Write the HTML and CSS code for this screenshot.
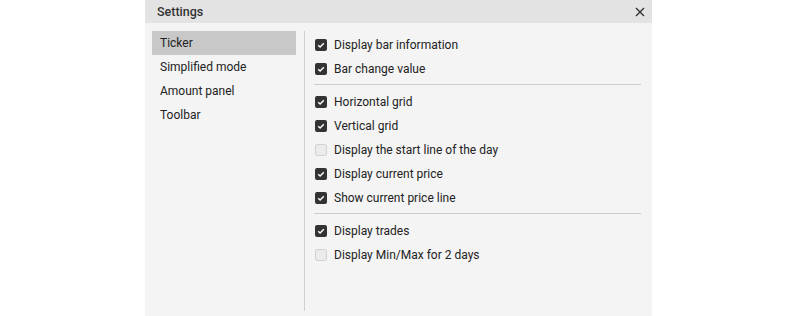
FILE: index.html
```html
<!DOCTYPE html>
<html>
<head>
    <meta charset="UTF-8">
    <title>Settings</title>
    <link rel="stylesheet" href="styles.css">
</head>
<body>
    <div class="dialog">
        <div class="header">
            <span class="title">Settings</span>
            <svg class="close" width="10" height="10" viewBox="0 0 10 10"><path d="M1 1L9 9M9 1L1 9" stroke="#333" stroke-width="1.4" fill="none"/></svg>
        </div>
        <div class="body">
            <div class="sidebar">
                <div class="navItem active">Ticker</div>
                <div class="navItem">Simplified mode</div>
                <div class="navItem">Amount panel</div>
                <div class="navItem">Toolbar</div>
            </div>
            <div class="content">
                <div class="row"><span class="box on"><svg width="12" height="12" viewBox="0 0 12 12"><path d="M3.2 6.2L5.1 8L8.8 4.2" stroke="#fff" stroke-width="1.4" fill="none"/></svg></span>Display bar information</div>
                <div class="row"><span class="box on"><svg width="12" height="12" viewBox="0 0 12 12"><path d="M3.2 6.2L5.1 8L8.8 4.2" stroke="#fff" stroke-width="1.4" fill="none"/></svg></span>Bar change value</div>
                <div class="sep"></div>
                <div class="row"><span class="box on"><svg width="12" height="12" viewBox="0 0 12 12"><path d="M3.2 6.2L5.1 8L8.8 4.2" stroke="#fff" stroke-width="1.4" fill="none"/></svg></span>Horizontal grid</div>
                <div class="row"><span class="box on"><svg width="12" height="12" viewBox="0 0 12 12"><path d="M3.2 6.2L5.1 8L8.8 4.2" stroke="#fff" stroke-width="1.4" fill="none"/></svg></span>Vertical grid</div>
                <div class="row"><span class="box"></span>Display the start line of the day</div>
                <div class="row"><span class="box on"><svg width="12" height="12" viewBox="0 0 12 12"><path d="M3.2 6.2L5.1 8L8.8 4.2" stroke="#fff" stroke-width="1.4" fill="none"/></svg></span>Display current price</div>
                <div class="row"><span class="box on"><svg width="12" height="12" viewBox="0 0 12 12"><path d="M3.2 6.2L5.1 8L8.8 4.2" stroke="#fff" stroke-width="1.4" fill="none"/></svg></span>Show current price line</div>
                <div class="sep"></div>
                <div class="row"><span class="box on"><svg width="12" height="12" viewBox="0 0 12 12"><path d="M3.2 6.2L5.1 8L8.8 4.2" stroke="#fff" stroke-width="1.4" fill="none"/></svg></span>Display trades</div>
                <div class="row"><span class="box"></span>Display Min/Max for 2 days</div>
            </div>
        </div>
    </div>
</body>
</html>
```

FILE: styles.css
```css
body {
    margin: 0;
    background: #fff;
    font-family: Roboto, "Liberation Sans", sans-serif;
}
.dialog {
    width: 507px;
    height: 316px;
    margin-left: 145px;
    background: #f4f4f4;
    display: flex;
    flex-direction: column;
}
.header {
    height: 23px;
    background: #e3e3e3;
    display: flex;
    align-items: center;
    justify-content: space-between;
    padding: 0 7px 0 12px;
}
.title {
    font-size: 12.5px;
    font-weight: 500;
    color: #333;
}
.body {
    flex: 1;
    display: flex;
    padding: 8px 11px 5px 7px;
}
.sidebar {
    width: 144px;
    margin-right: 8px;
}
.navItem {
    height: 24px;
    line-height: 24px;
    padding-left: 8px;
    font-size: 12px;
    color: #222;
}
.navItem.active {
    background: #c8c8c8;
}
.content {
    flex: 1;
    border-left: 1px solid #cfcfcf;
    padding-left: 9px;
    padding-top: 2px;
}
.row {
    height: 24px;
    display: flex;
    align-items: center;
    font-size: 12px;
    color: #222;
}
.box {
    width: 12px;
    height: 12px;
    box-sizing: border-box;
    border-radius: 2px;
    margin-left: 1px;
    margin-right: 7px;
    background: #ebebeb;
    border: 1px solid #d2d2d2;
    display: flex;
}
.box.on {
    background: #333;
    border: none;
}
.sep {
    height: 1px;
    background: #cdcdcd;
    margin: 3px 0 5px;
}
```
